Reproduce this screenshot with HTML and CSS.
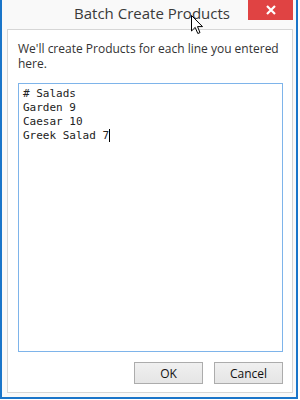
FILE: index.html
```html
<!DOCTYPE html>
<html lang="en">
<head>
    <meta charset="UTF-8">
    <meta name="viewport" content="width=device-width, initial-scale=1.0">
    <title>Batch Create Products</title>
    <link rel="stylesheet" href="styles.css">
</head>
<body>
    <div class="window">
        <div class="titlebar">
            <div class="title">Batch Create Products</div>
            <button class="close" aria-label="Close">
                <svg width="10" height="10" viewBox="0 0 10 10">
                    <path d="M1 1 L9 9 M9 1 L1 9" stroke="#fff" stroke-width="2.2" fill="none"/>
                </svg>
            </button>
        </div>
        <div class="client">
            <p class="intro">We'll create Products for each line you entered here.</p>
            <div class="entry"># Salads
Garden 9
Caesar 10
Greek Salad 7<span class="caret"></span></div>
            <div class="actions">
                <button class="btn btn-ok">OK</button>
                <button class="btn btn-cancel">Cancel</button>
            </div>
        </div>
        <!-- mouse pointer sitting over the title -->
        <svg class="pointer" width="13" height="20" viewBox="0 0 13 20">
            <path d="M0.5 0.5 L0.5 16 L4.2 12.4 L6.8 18.5 L9 17.6 L6.5 11.6 L11.5 11.6 Z" fill="#fff" stroke="#000" stroke-width="1" stroke-linejoin="miter"/>
        </svg>
    </div>
</body>
</html>
```

FILE: styles.css
```css
body {
    margin: 0;
    width: 300px;
    height: 400px;
    background: #fff;
    font-family: "Open Sans", "Noto Sans", sans-serif;
    overflow: hidden;
}
.window {
    position: relative;
    box-sizing: border-box;
    width: 298px;
    height: 399px;
    background: #f9f9f9;
    border: 2px solid #1a75c9;
    border-top: none;
    padding: 0 3px 4px 5px;
    display: flex;
    flex-direction: column;
}
.titlebar {
    position: relative;
    height: 29px;
    flex: none;
    display: flex;
    justify-content: center;
}
.title {
    font-size: 15px;
    line-height: 27px;
    color: #3a3a3a;
    padding-left: 4px;
}
.close {
    position: absolute;
    top: 0;
    right: 0;
    width: 45px;
    height: 20px;
    border: none;
    padding: 0;
    background: #e04343;
    display: flex;
    justify-content: center;
    align-items: center;
}
.client {
    flex: 1;
    background: #fff;
    border: 1px solid #d6d6d6;
    padding: 11px 9px 8px 10px;
    display: flex;
    flex-direction: column;
}
.intro {
    margin: 0;
    font-size: 12px;
    line-height: 15px;
    color: #333;
}
.entry {
    flex: 1;
    margin-top: 12px;
    border: 1px solid #7eb4ea;
    padding: 3px 4px;
    font-family: "DejaVu Sans Mono", "Liberation Mono", monospace;
    font-size: 11px;
    line-height: 14px;
    color: #222;
    white-space: pre;
}
.caret {
    display: inline-block;
    width: 1px;
    height: 13px;
    background: #000;
    vertical-align: -3px;
}
.actions {
    display: flex;
    justify-content: flex-end;
    gap: 11px;
    margin-top: 10px;
}
.btn {
    width: 69px;
    height: 22px;
    padding: 0;
    border: 1px solid #acacac;
    background: linear-gradient(#f0f0f0, #e5e5e5);
    font-family: "Open Sans", "Noto Sans", sans-serif;
    font-size: 12px;
    color: #111;
}
.pointer {
    position: absolute;
    left: 189px;
    top: 15px;
}
```
